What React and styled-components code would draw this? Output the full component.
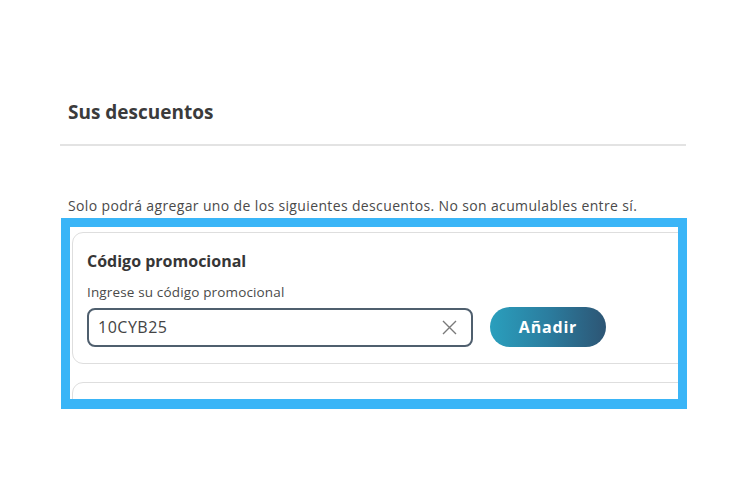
import React from 'react'
import styled, { createGlobalStyle } from 'styled-components'

const GlobalStyle = createGlobalStyle`
  body {
    margin: 0;
    background: #fff;
    font-family: "Open Sans", Lato, sans-serif;
  }
`

const Wrapper = styled.section`
  width: 626px;
  margin-left: 60px;
  padding-top: 100px;
`

const Title = styled.h2`
  margin: 0;
  padding-left: 8px;
  font-size: 19px;
  line-height: 24px;
  font-weight: 700;
  color: #3b3b3b;
`

const Divider = styled.hr`
  margin: 20px 0 0;
  border: 0;
  border-top: 2px solid #e3e3e3;
`

const Notice = styled.p`
  margin: 51px 0 0;
  padding-left: 8px;
  font-size: 14px;
  letter-spacing: 0.36px;
  line-height: 18px;
  color: #4a4a4a;
`

const Highlight = styled.div`
  margin: 3px 0 0 1px;
  width: 606px;
  height: 167px;
  border: 9px solid #3ab5f7;
  border-bottom-width: 10px;
  overflow: hidden;
  padding: 5px 0 0 2px;
  display: flex;
  flex-direction: column;
  gap: 18px;
`

const Card = styled.div`
  flex: none;
  margin-right: -24px;
  border: 1px solid #dedede;
  border-radius: 11px;
  padding: ${({ $empty }) => ($empty ? '0' : '18px 14px 16px')};
  height: ${({ $empty }) => ($empty ? '80px' : 'auto')};
`

const CardTitle = styled.h3`
  margin: 0;
  font-size: 16px;
  line-height: 20px;
  font-weight: 700;
  color: #363636;
`

const Label = styled.label`
  display: block;
  margin-top: 13px;
  font-size: 13.5px;
  letter-spacing: 0.15px;
  line-height: 16px;
  color: #4a4a4a;
`

const Row = styled.div`
  display: flex;
  align-items: center;
  gap: 17px;
  margin-top: 7px;
`

const InputBox = styled.div`
  box-sizing: border-box;
  width: 386px;
  height: 39px;
  border: 2px solid #4f5f6e;
  border-radius: 8px;
  display: flex;
  align-items: center;
  padding: 0 14px 0 9px;
`

const Input = styled.input`
  flex: 1;
  border: 0;
  outline: none;
  background: transparent;
  font-family: "Open Sans", Lato, sans-serif;
  font-size: 16px;
  letter-spacing: 0.5px;
  color: #444;
  padding: 0;
`

const Clear = styled.button`
  border: 0;
  background: none;
  padding: 0;
  display: flex;
  color: #7a7a7a;
`

const AddButton = styled.button`
  width: 116px;
  height: 40px;
  border: 0;
  border-radius: 20px;
  background: linear-gradient(90deg, #2a9fbd 0%, #2b7d9f 50%, #2d5574 100%);
  color: #fff;
  font-family: "Open Sans", Lato, sans-serif;
  font-size: 16px;
  letter-spacing: 0.8px;
  font-weight: 700;
`

const App = () => {
  return (
    <>
      <GlobalStyle />
      <Wrapper>
        <Title>Sus descuentos</Title>
        <Divider />
        <Notice>Solo podrá agregar uno de los siguientes descuentos. No son acumulables entre sí.</Notice>
        <Highlight>
          <Card>
            <CardTitle>Código promocional</CardTitle>
            <Label>Ingrese su código promocional</Label>
            <Row>
              <InputBox>
                <Input defaultValue="10CYB25" />
                <Clear aria-label="Borrar">
                  <svg width="15" height="15" viewBox="0 0 15 15" fill="none" stroke="currentColor" strokeWidth="1.4">
                    <path d="M1 1l13 13M14 1L1 14" />
                  </svg>
                </Clear>
              </InputBox>
              <AddButton>Añadir</AddButton>
            </Row>
          </Card>
          <Card $empty />
        </Highlight>
      </Wrapper>
    </>
  )
}

export default App
